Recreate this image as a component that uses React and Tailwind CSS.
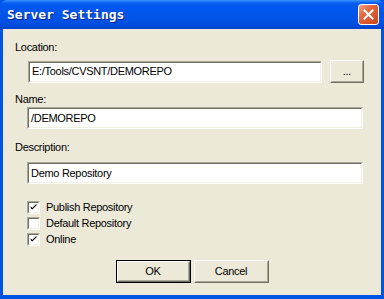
import React from "react";

function Sunken({ className = "", children }) {
  return (
    <div className={`border border-t-[#ACA899] border-l-[#ACA899] border-b-white border-r-white ${className}`}>
      <div className="w-full h-full border border-t-[#716F64] border-l-[#716F64] border-b-[#F1EFE2] border-r-[#F1EFE2] bg-white flex items-center">
        {children}
      </div>
    </div>
  );
}

function Field({ value, className }) {
  return (
    <Sunken className={className}>
      <span className="pl-[2px] text-[11px] leading-[13px] tracking-[-0.3px] text-black whitespace-nowrap">{value}</span>
    </Sunken>
  );
}

function Button({ children, def, className = "" }) {
  const inner = (
    <div className="w-full h-full border border-t-white border-l-white border-b-[#716F64] border-r-[#716F64]">
      <div className="w-full h-full border border-t-[#ECE9D8] border-l-[#ECE9D8] border-b-[#ACA899] border-r-[#ACA899] bg-[#ECE9D8] flex items-center justify-center text-[11px] leading-[13px] tracking-[-0.3px] text-black">
        {children}
      </div>
    </div>
  );
  if (def) {
    return <div className={`border border-black ${className}`}>{inner}</div>;
  }
  return <div className={className}>{inner}</div>;
}

function Check({ checked, label }) {
  return (
    <div className="flex items-center h-[16px]">
      <Sunken className="w-[13px] h-[13px]">
        {checked && (
          <svg width="11" height="11" viewBox="0 0 11 11" className="block">
            <path d="M2 4 L2 6 L4 8 L9 3 L9 1 L4 6 Z" fill="#000" />
          </svg>
        )}
      </Sunken>
      <span className="ml-[6px] text-[11px] leading-[13px] tracking-[-0.3px] text-black">{label}</span>
    </div>
  );
}

export default function App() {
  return (
    <div className="w-[384px] h-[299px] flex flex-col bg-[#0054E3] font-['Liberation_Sans',Arial,sans-serif] overflow-hidden">
      <div className="h-[29px] shrink-0 flex items-center pl-[7px] pr-[5px] rounded-t-[7px] bg-[linear-gradient(to_bottom,#3D95FF_0px,#0A5FF0_3px,#0058EE_6px,#0053E6_20px,#004AD9_26px,#0041C8_29px)]">
        <span className="font-['DejaVu_Sans_Mono',monospace] font-bold text-[13px] text-white [text-shadow:1px_1px_0_#0A2383]">
          Server Settings
        </span>
        <div className="ml-auto w-[21px] h-[21px] rounded-[3px] border border-white bg-[linear-gradient(135deg,#F0A085_0%,#E2653C_40%,#C9451D_100%)] flex items-center justify-center">
          <svg width="11" height="11" viewBox="0 0 11 11">
            <path d="M1.5 1.5 L9.5 9.5 M9.5 1.5 L1.5 9.5" stroke="#fff" strokeWidth="2" strokeLinecap="square" />
          </svg>
        </div>
      </div>
      <div className="flex-1 flex flex-col mx-[3px] mb-[4px] bg-[#ECE9D8] pl-[12px] pt-[12px]">
        <div className="text-[11px] leading-[13px] tracking-[-0.3px] text-black">Location:</div>
        <div className="flex items-center mt-[6px] h-[23px] ml-[13px]">
          <Field value="E:/Tools/CVSNT/DEMOREPO" className="w-[294px] h-[22px]" />
          <Button className="ml-[8px] w-[34px] h-[23px]">...</Button>
        </div>
        <div className="text-[11px] leading-[13px] tracking-[-0.3px] text-black mt-[10px]">Name:</div>
        <Field value="/DEMOREPO" className="mt-[1px] ml-[12px] w-[336px] h-[22px]" />
        <div className="text-[11px] leading-[13px] tracking-[-0.3px] text-black mt-[12px]">Description:</div>
        <Field value="Demo Repository" className="mt-[8px] ml-[12px] w-[336px] h-[22px]" />
        <div className="mt-[15px] ml-[12px] flex flex-col">
          <Check checked label="Publish Repository" />
          <Check label="Default Repository" />
          <Check checked label="Online" />
        </div>
        <div className="mt-[13px] flex justify-center gap-[3px] pr-[12px]">
          <Button def className="w-[75px] h-[23px]">OK</Button>
          <Button className="w-[75px] h-[23px]">Cancel</Button>
        </div>
      </div>
    </div>
  );
}
